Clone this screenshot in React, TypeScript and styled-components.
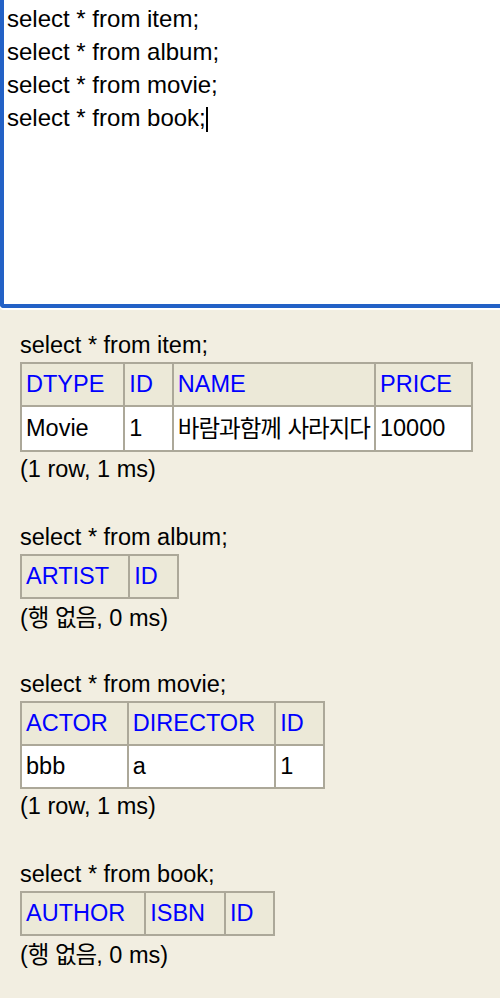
import { Fragment } from "react"
import styled, { createGlobalStyle } from "styled-components"

const GlobalStyle = createGlobalStyle`
  html, body {
    margin: 0;
    padding: 0;
    background: #f2eee1;
  }
  body {
    font-family: "Liberation Sans", Arial, "Noto Sans CJK KR", sans-serif;
    color: #000;
  }
`

interface ResultType {
  sql: string
  columns: string[]
  rows: string[][]
  status: string
}

const QUERIES = [
  "select * from item;",
  "select * from album;",
  "select * from movie;",
  "select * from book;",
]

const RESULTS: ResultType[] = [
  {
    sql: "select * from item;",
    columns: ["DTYPE", "ID", "NAME", "PRICE"],
    rows: [["Movie", "1", "바람과함께 사라지다", "10000"]],
    status: "(1 row, 1 ms)",
  },
  {
    sql: "select * from album;",
    columns: ["ARTIST", "ID"],
    rows: [],
    status: "(행 없음, 0 ms)",
  },
  {
    sql: "select * from movie;",
    columns: ["ACTOR", "DIRECTOR", "ID"],
    rows: [["bbb", "a", "1"]],
    status: "(1 row, 1 ms)",
  },
  {
    sql: "select * from book;",
    columns: ["AUTHOR", "ISBN", "ID"],
    rows: [],
    status: "(행 없음, 0 ms)",
  },
]

// hangul glyphs in the fallback font are wider than the original's, so tighten them
const renderText = (text: string) =>
  text.split(/([\uac00-\ud7a3]+)/).map((part, i) =>
    /[\uac00-\ud7a3]/.test(part) ? (
      <Hangul key={i}>{part}</Hangul>
    ) : (
      <Fragment key={i}>{part}</Fragment>
    )
  )

export default function App() {
  return (
    <>
      <GlobalStyle />
      <Editor>
        {QUERIES.map((q, i) => (
          <EditorLine key={q}>
            {q}
            {i === QUERIES.length - 1 && <Caret />}
          </EditorLine>
        ))}
      </Editor>

      <Results>
        {RESULTS.map((result) => (
          <Block key={result.sql}>
            <Line>{result.sql}</Line>
            <ResultTable>
              <thead>
                <tr>
                  {result.columns.map((col) => (
                    <HeadCell key={col}>{col}</HeadCell>
                  ))}
                </tr>
              </thead>
              <tbody>
                {result.rows.map((row, r) => (
                  <tr key={r}>
                    {row.map((cell, c) => (
                      <Cell key={c}>{renderText(cell)}</Cell>
                    ))}
                  </tr>
                ))}
              </tbody>
            </ResultTable>
            <Line>{renderText(result.status)}</Line>
          </Block>
        ))}
      </Results>
    </>
  )
}

const Editor = styled.div`
  height: 302px;
  padding: 2px 0 0 3px;
  background: #fff;
  border-left: 4px solid #2361c6;
  border-bottom: 4px solid #2361c6;
  border-bottom-left-radius: 4px;
  box-shadow: 0 2px 0 #fff;
  font-size: 24px;
  line-height: 33px;
  white-space: pre;
  overflow: hidden;
`

const EditorLine = styled.div`
  height: 33px;
`

const Caret = styled.span`
  display: inline-block;
  width: 2px;
  height: 25px;
  margin-left: 0;
  background: #000;
  vertical-align: -6px;
`

const Results = styled.div`
  padding: 20px 20px 0;
  font-size: 23.5px;
  line-height: 34px;
`

const Block = styled.div`
  margin-bottom: 34px;
`

const Line = styled.div`
  height: 34px;
  white-space: nowrap;
`

const ResultTable = styled.table`
  border-collapse: collapse;
  border: 2px solid #aca899;
`

const HeadCell = styled.th`
  padding: 7px 19px 7px 4px;
  background: #ece9d8;
  border: 2px solid #aca899;
  color: #0000ff;
  font-weight: normal;
  text-align: left;
  line-height: 27px;
  white-space: nowrap;
`

const Cell = styled.td`
  padding: 7px 4px;
  background: #fff;
  border: 2px solid #aca899;
  text-align: left;
  line-height: 27px;
  white-space: nowrap;
`

const Hangul = styled.span`
  font-family: "Noto Sans CJK KR", sans-serif;
  letter-spacing: -1px;
`
